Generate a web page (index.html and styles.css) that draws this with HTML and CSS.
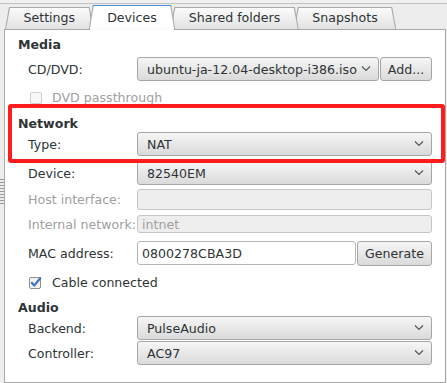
FILE: index.html
```html
<!DOCTYPE html>
<html lang="en">
<head>
    <meta charset="UTF-8">
    <title>Devices</title>
    <link rel="stylesheet" href="styles.css">
</head>
<body>

<div class="topline"></div>

<div class="window">
    <div class="grip"></div>

    <div class="notebook">
        <div class="tabs">
            <div class="tab tab-1"><span>Settings</span></div>
            <div class="tab tab-2 active"><span>Devices</span></div>
            <div class="tab tab-3"><span>Shared folders</span></div>
            <div class="tab tab-4"><span>Snapshots</span></div>
        </div>

        <div class="page">
            <!-- Media -->
            <div class="group-title">Media</div>
            <div class="row row-cd">
                <div class="label">CD/DVD:</div>
                <div class="pair">
                    <div class="combo combo-cd">
                        <span class="combo-text">ubuntu-ja-12.04-desktop-i386.iso</span>
                        <svg class="chevron" width="10" height="6" viewBox="0 0 10 6"><path d="M1 0.5 L5 4.5 L9 0.5" /></svg>
                    </div>
                    <div class="button btn-add">Add...</div>
                </div>
            </div>
            <div class="check check-dvd disabled">
                <svg class="box" width="13" height="13" viewBox="0 0 13 13"><rect x="1.5" y="1.5" width="11" height="11" rx="1.5" /></svg>
                <span>DVD passthrough</span>
            </div>

            <!-- Network -->
            <div class="group-title net-title">Network</div>
            <div class="row">
                <div class="label">Type:</div>
                <div class="combo">
                    <span class="combo-text">NAT</span>
                    <svg class="chevron" width="10" height="6" viewBox="0 0 10 6"><path d="M1 0.5 L5 4.5 L9 0.5" /></svg>
                </div>
            </div>
            <div class="row row-device">
                <div class="label">Device:</div>
                <div class="combo">
                    <span class="combo-text">82540EM</span>
                    <svg class="chevron" width="10" height="6" viewBox="0 0 10 6"><path d="M1 0.5 L5 4.5 L9 0.5" /></svg>
                </div>
            </div>
            <div class="row row-host">
                <div class="label muted">Host interface:</div>
                <div class="entry entry-host disabled"></div>
            </div>
            <div class="row row-intnet">
                <div class="label muted">Internal network:</div>
                <div class="entry entry-intnet disabled">intnet</div>
            </div>
            <div class="row row-mac">
                <div class="label">MAC address:</div>
                <div class="pair">
                    <div class="entry entry-mac">0800278CBA3D</div>
                    <div class="button btn-generate">Generate</div>
                </div>
            </div>
            <div class="check check-cable">
                <svg class="box" width="14" height="13" viewBox="0 0 14 13">
                    <rect x="0.5" y="1.5" width="11" height="11" rx="1.5" />
                    <path class="tick" d="M2.8 6.8 L5.2 9.6 L11.2 2.2" />
                </svg>
                <span>Cable connected</span>
            </div>

            <!-- Audio -->
            <div class="group-title audio-title">Audio</div>
            <div class="row">
                <div class="label">Backend:</div>
                <div class="combo">
                    <span class="combo-text">PulseAudio</span>
                    <svg class="chevron" width="10" height="6" viewBox="0 0 10 6"><path d="M1 0.5 L5 4.5 L9 0.5" /></svg>
                </div>
            </div>
            <div class="row row-controller">
                <div class="label">Controller:</div>
                <div class="combo">
                    <span class="combo-text">AC97</span>
                    <svg class="chevron" width="10" height="6" viewBox="0 0 10 6"><path d="M1 0.5 L5 4.5 L9 0.5" /></svg>
                </div>
            </div>

            <!-- red annotation frame -->
            <div class="highlight"></div>
        </div>
    </div>
</div>

</body>
</html>
```

FILE: styles.css
```css
/* Basic reset */
* {
    margin: 0;
    padding: 0;
    box-sizing: border-box;
}

body {
    font-family: 'DejaVu Sans', 'Liberation Sans', sans-serif;
    font-size: 12.6px;
    color: #2e3436;
    background-color: #ededed;
    width: 447px;
    height: 383px;
    overflow: hidden;
}

.topline {
    height: 4px;
    border-bottom: 1px solid #c2c2c2;
    background-color: #f0f0f0;
}

.window {
    display: flex;
}

/* splitter handle on the left */
.grip {
    width: 4px;
    height: 27px;
    margin-top: 174px;
    background-image: radial-gradient(circle, #9a9a9a 0.7px, transparent 1px);
    background-size: 2px 3px;
}

.notebook {
    flex: 1;
    margin-right: 1px;
}

/* Tabs */
.tabs {
    display: flex;
    align-items: flex-end;
    height: 25px;
    padding-left: 1px;
}

.tab {
    position: relative;
    height: 22px;
    margin-right: -5px;
    padding: 1px 1px 0;
    background-color: #a9a9a9;
    clip-path: polygon(4px 0, calc(100% - 4px) 0, 100% 100%, 0 100%);
}

.tab span {
    display: block;
    height: 100%;
    padding: 2px 17.5px 0;
    line-height: 16px;
    white-space: nowrap;
    background: linear-gradient(#fbfbfb, #e2e2e2);
    clip-path: polygon(4px 0, calc(100% - 4px) 0, 100% 100%, 0 100%);
}

.tab-1 { z-index: 4; }
.tab-2 { z-index: 5; }
.tab-3 { z-index: 3; }
.tab-4 { z-index: 2; }

.tab.active {
    height: 25px;
    margin-bottom: -1px;
    background: linear-gradient(#4a90d9 0, #4a90d9 1px, #a9a9a9 1px);
}

.tab.active span {
    padding-top: 4px;
    background: linear-gradient(#ffffff, #ffffff 80%, #fafafa);
}

/* Page */
.page {
    position: relative;
    z-index: 1;
    height: 354px;
    padding: 7px 13px 0 13px;
    background-color: #ffffff;
    border: 1px solid #a8a8a8;
}

.group-title {
    height: 16px;
    line-height: 16px;
    font-weight: bold;
}

.net-title { margin-top: 8px; }
.audio-title { margin-top: 7px; }

.row {
    display: grid;
    grid-template-columns: 109px 1fr;
    align-items: center;
    padding-left: 10px;
}

.row-cd { margin-top: 4px; }
.row-device { margin-top: 5px; }
.row-host { margin-top: 4px; }
.row-intnet { margin-top: 5px; }
.row-mac { margin-top: 8px; }
.row-controller { margin-top: 1px; }

.label {
    white-space: nowrap;
}

.muted {
    color: #a0a0a0;
}

.pair {
    display: flex;
    gap: 1px;
}

/* Combo boxes and buttons */
.combo {
    display: flex;
    align-items: center;
    gap: 3px;
    height: 24px;
    padding: 0 7px 0 9px;
    border: 1px solid #a6a6a6;
    border-radius: 3px;
    background: linear-gradient(#f6f6f6, #dadada);
}

.combo-text {
    flex: 1;
    min-width: 0;
    white-space: nowrap;
}

.combo-cd {
    flex: 1;
    min-width: 0;
}

.chevron {
    flex: none;
}

.chevron path {
    fill: none;
    stroke: #555753;
    stroke-width: 1.2;
}

.button {
    display: flex;
    align-items: center;
    justify-content: center;
    height: 24px;
    border: 1px solid #a6a6a6;
    border-radius: 3px;
    background: linear-gradient(#f6f6f6, #dadada);
    white-space: nowrap;
}

.btn-add {
    width: 52px;
}

.btn-generate {
    width: 75px;
    height: 25px;
}

/* Text entries */
.entry {
    display: flex;
    align-items: center;
    padding: 0 4px;
    border: 1px solid #b6b6b6;
    border-radius: 3px;
    background-color: #ffffff;
    white-space: nowrap;
}

.entry.disabled {
    color: #a0a0a0;
    border-color: #c6c6c6;
    background-color: #eeeeee;
}

.entry-host { height: 21px; }
.entry-intnet { height: 18px; }

.entry-mac {
    flex: 1;
    height: 24px;
}

/* Check boxes */
.check {
    display: flex;
    align-items: center;
    height: 21px;
    padding-left: 11px;
}

.check-dvd {
    margin-top: 6px;
    gap: 10px;
    color: #a0a0a0;
}

.check-dvd .box rect {
    fill: #f8f8f8;
    stroke: #cfcfcf;
}

.check-cable {
    margin-top: 6px;
    gap: 9px;
}

.check-cable .box rect {
    fill: #f2f2f2;
    stroke: #8e8e8e;
}

.check-cable .tick {
    fill: none;
    stroke: #3d74c4;
    stroke-width: 2.2;
    stroke-linecap: round;
    stroke-linejoin: round;
}

/* Red annotation frame around the network type */
.highlight {
    position: absolute;
    left: 3px;
    top: 74px;
    width: 437px;
    height: 59px;
    border: 4px solid #ff1c1c;
    border-radius: 3px;
}
```
